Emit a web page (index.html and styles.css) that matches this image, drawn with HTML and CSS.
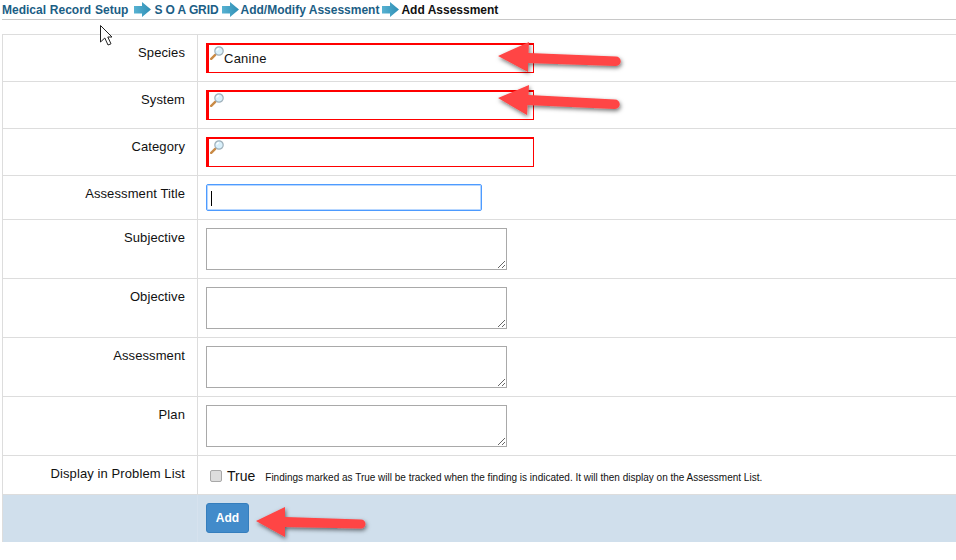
FILE: index.html
```html
<!DOCTYPE html>
<html lang="en">
<head>
    <meta charset="UTF-8">
    <title>Add Assessment</title>
    <link rel="stylesheet" href="styles.css">
</head>
<body>
    <svg width="0" height="0" class="defs">
        <defs>
            <linearGradient id="crumb-fill" x1="0" x2="1" y1="0" y2="0">
                <stop offset="0" stop-color="#58b2d2"/>
                <stop offset="1" stop-color="#2f8fb5"/>
            </linearGradient>
        </defs>
        <symbol id="crumb-arrow" viewBox="0 0 17 15">
            <path d="M0 4h8V0l9 7.500L8 15v-3.500H0z" fill="url(#crumb-fill)"/>
        </symbol>
        <symbol id="lens" viewBox="0 0 14 14">
            <path d="M1.200 12.800 5.200 8.800" stroke="#c98a45" stroke-width="2.400" stroke-linecap="round"/>
            <circle cx="9" cy="5" r="4.200" fill="#d9f0fb" stroke="#9fb0ba" stroke-width="1.200"/>
            <path d="M6.800 4.800A2.400 2.400 0 0 1 9 2.600" fill="none" stroke="#fff" stroke-width="1.200"/>
        </symbol>
    </svg>

    <nav class="crumbs">
        <a href="#" class="crumb first">Medical Record Setup</a>
        <svg class="crumb-icon"><use href="#crumb-arrow"/></svg>
        <a href="#" class="crumb tight">S O A GRID</a>
        <svg class="crumb-icon"><use href="#crumb-arrow"/></svg>
        <a href="#" class="crumb">Add/Modify Assessment</a>
        <svg class="crumb-icon"><use href="#crumb-arrow"/></svg>
        <span class="crumb current">Add Assessment</span>
    </nav>

    <form class="form-table">
        <div class="row row-lookup">
            <div class="label">Species</div>
            <div class="cell">
                <div class="lookup"><svg class="lens"><use href="#lens"/></svg><span class="lookup-value">Canine</span></div>
            </div>
        </div>
        <div class="row row-lookup">
            <div class="label">System</div>
            <div class="cell">
                <div class="lookup"><svg class="lens"><use href="#lens"/></svg></div>
            </div>
        </div>
        <div class="row row-lookup">
            <div class="label">Category</div>
            <div class="cell">
                <div class="lookup"><svg class="lens"><use href="#lens"/></svg></div>
            </div>
        </div>
        <div class="row row-title">
            <div class="label">Assessment Title</div>
            <div class="cell">
                <div class="title-input"><span class="caret"></span></div>
            </div>
        </div>
        <div class="row row-area">
            <div class="label">Subjective</div>
            <div class="cell"><textarea class="area"></textarea></div>
        </div>
        <div class="row row-area">
            <div class="label">Objective</div>
            <div class="cell"><textarea class="area"></textarea></div>
        </div>
        <div class="row row-area">
            <div class="label">Assessment</div>
            <div class="cell"><textarea class="area"></textarea></div>
        </div>
        <div class="row row-area">
            <div class="label">Plan</div>
            <div class="cell"><textarea class="area"></textarea></div>
        </div>
        <div class="row row-check">
            <div class="label">Display in Problem List</div>
            <div class="cell check-cell">
                <input type="checkbox" class="check">
                <span class="check-label">True</span>
                <span class="check-note">Findings marked as True will be tracked when the finding is indicated. It will then display on the Assessment List.</span>
            </div>
        </div>
        <div class="row row-foot">
            <div class="label"></div>
            <div class="cell"><button type="button" class="add-btn">Add</button></div>
        </div>
    </form>

    <!-- annotations drawn over the screenshot -->
    <svg class="marks" viewBox="0 0 956 560">
        <defs>
            <filter id="soft" x="-10%" y="-30%" width="125%" height="170%">
                <feDropShadow dx="1" dy="2" stdDeviation="2" flood-color="#000" flood-opacity="0.55"/>
            </filter>
        </defs>
        <g fill="#ff4444" filter="url(#soft)">
            <path d="M498 56 529 42 528.500 53 616 56.500A4.700 4.700 0 0 1 616 66L528 63 528 72z"/>
            <path d="M498 98 529 85 528.500 95 615 99.500A4.700 4.700 0 0 1 615 109L527.500 105 527 115z"/>
            <path d="M256 521 285 507 285 517 361 519.500A4.500 4.500 0 0 1 361 528.500L285 527 285 537z"/>
        </g>
        <path class="cursor" d="M100.500 25.500V42L104.800 38 108 45 111 43.800 107.800 37H112z"/>
    </svg>
</body>
</html>
```

FILE: styles.css
```css
body {
    font-family: 'Liberation Sans', Arial, sans-serif;
    background: #fff;
    color: #111;
    margin: 0;
    height: 560px;
    overflow: hidden;
    position: relative;
}
.defs {
    position: absolute;
}
.crumbs {
    display: flex;
    align-items: center;
    height: 19px;
    margin-left: 2px;
    border-bottom: 1px solid #c8c8c8;
    font-size: 12px;
    font-weight: 700;
}
.crumb {
    color: #1b5e85;
    text-decoration: none;
    white-space: nowrap;
}
.crumb.current {
    color: #111;
}
.crumb.first {
    margin-right: 6px;
    word-spacing: 0.5px;
}
.crumb.tight {
    letter-spacing: -0.1px;
}
.crumb-icon {
    width: 17px;
    height: 15px;
    margin: 0 2px 0 3px;
}
.crumb.first + .crumb-icon {
    margin: 0 3px 0 0;
}
.form-table {
    margin: 14px 0 0 2px;
    border-top: 1px solid #ddd;
    border-left: 1px solid #ddd;
}
.row {
    display: flex;
    border-bottom: 1px solid #ddd;
    box-sizing: border-box;
}
.row-lookup {
    height: 47px;
}
.row-title {
    height: 44px;
}
.row-area {
    height: 59px;
}
.row-check {
    height: 39px;
}
.label {
    width: 195px;
    box-sizing: border-box;
    flex: none;
    padding: 10px 12px 0 0;
    border-right: 1px solid #ddd;
    text-align: right;
    font-size: 13px;
    line-height: 16px;
    letter-spacing: 0.1px;
}
.cell {
    flex: 1;
    padding: 8px 0 0 8px;
}
.lookup {
    width: 328px;
    height: 30px;
    box-sizing: border-box;
    border: 1px solid #f00;
    border-top-width: 2px;
    border-left-width: 3px;
    display: flex;
}
.lens {
    width: 14px;
    height: 14px;
    flex: none;
    margin: 1px 0 0 1px;
}
.lookup-value {
    font-size: 13px;
    line-height: 24px;
    margin-top: 2px;
    letter-spacing: 0.25px;
}
.title-input {
    width: 276px;
    height: 27px;
    box-sizing: border-box;
    border: 1px solid #4d9bff;
    box-shadow: 0 0 0 1px rgba(77, 155, 255, 0.4) inset;
    border-radius: 2px;
    padding: 6px 0 0 4px;
}
.caret {
    display: block;
    width: 1px;
    height: 15px;
    background: #000;
}
.area {
    display: block;
    width: 301px;
    height: 42px;
    margin: 0;
    box-sizing: border-box;
    border: 1px solid #a9a9a9;
}
.check-cell {
    display: flex;
    align-items: center;
    padding: 2px 0 0 12px;
}
.check {
    appearance: none;
    width: 12px;
    height: 12px;
    margin: 0 5px 0 0;
    border: 1px solid #a8a8a8;
    border-radius: 2px;
    background: #ddd;
}
.check-label {
    font-size: 14px;
    margin-right: 10px;
}
.check-note {
    font-size: 10px;
    padding-top: 2px;
}
.row-foot {
    height: 47px;
    background: #d0dfec;
    border-bottom: none;
}
.row-foot .label {
    border-right-color: #d6e2ee;
}
.add-btn {
    width: 43px;
    height: 30px;
    background: #428bca;
    border: 1px solid #357ebd;
    border-radius: 3px;
    color: #fff;
    font-family: inherit;
    font-size: 12px;
    font-weight: 700;
    padding: 0;
}
.marks {
    position: absolute;
    left: 0;
    top: 0;
    width: 956px;
    height: 560px;
    pointer-events: none;
}
.cursor {
    fill: #fff;
    stroke: #222;
    stroke-width: 1;
}
```
